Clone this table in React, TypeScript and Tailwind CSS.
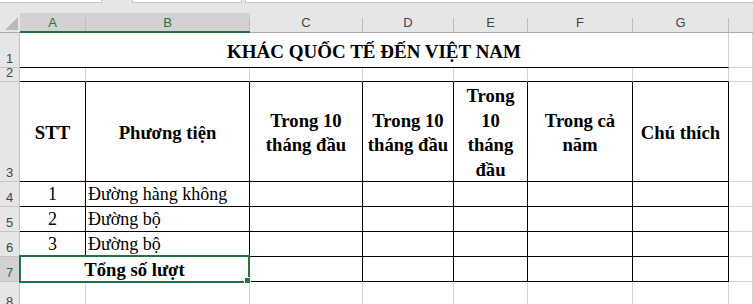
import React from 'react'

const serif = "font-['Liberation_Serif','Times_New_Roman',serif]"
const sans = "font-['Liberation_Sans',Arial,sans-serif]"

const GRAY = 'border-r border-b border-[#d4d4d4]'
const BLACK = 'border-r border-b border-black'
const ROW2 = 'border-r border-b border-r-[#d4d4d4] border-b-black'

const columns = ['A', 'B', 'C', 'D', 'E', 'F', 'G']

function ColHeader({ label, selected }: { label: string; selected?: boolean }) {
  return (
    <div
      className={`flex ${selected ? 'bg-[#d2d2d2] border-b-2 border-[#217346] text-[#217346]' : 'bg-[#e6e6e6] border-b border-[#ababab] text-[#444]'}`}
    >
      <div className="flex-1 flex items-center justify-center leading-[15px]">{label}</div>
      <div className="w-px mt-[5px] bg-[#bcbcbc]" />
    </div>
  )
}

function RowHeader({ n, selected }: { n: number; selected?: boolean }) {
  return (
    <div
      className={`flex items-end justify-center pb-[1px] leading-[15px] border-r border-b border-[#c4c4c4] ${selected ? 'bg-[#d2d2d2] text-[#217346]' : 'bg-[#e6e6e6] text-[#444]'}`}
    >
      {n}
    </div>
  )
}

function HeadCell({ lines }: { lines: string[] }) {
  return (
    <div className={`${BLACK} flex items-center justify-center pt-[3px] text-center font-bold text-[18.67px] leading-[24.5px] whitespace-nowrap`}>
      <span>
        {lines.map((l, i) => (
          <React.Fragment key={i}>
            {i > 0 && <br />}
            {l}
          </React.Fragment>
        ))}
      </span>
    </div>
  )
}

export default function App() {
  const rows = [
    { n: 4, stt: '1', name: 'Đường hàng không' },
    { n: 5, stt: '2', name: 'Đường bộ' },
    { n: 6, stt: '3', name: 'Đường bộ' },
  ]

  return (
    <div className={`w-[753px] h-[304px] overflow-hidden bg-white ${serif} text-black`}>
      {/* top strip with the formula bar boxes */}
      <div className="h-[13px] bg-[#e6e6e6] flex items-start">
        <div className="w-[102px] h-[3px] bg-white border-b border-r border-[#c6c6c6]" />
        <div className="ml-[30px] w-[110px] h-[3px] bg-white border-b border-x border-[#c6c6c6]" />
        <div className="ml-[3px] flex-1 h-[3px] bg-white border-b border-l border-[#c6c6c6]" />
      </div>

      <div className="grid grid-cols-[20px_66px_164px_113px_91px_74px_105px_96px_1fr] grid-rows-[20px_35px_14px_100px_25px_25px_25px_25px_29px]">
        {/* column headers */}
        <div className="bg-[#e6e6e6] border-b border-[#ababab] flex items-end justify-end pr-[2px] pb-[2px]">
          <svg width="13" height="13" viewBox="0 0 13 13">
            <polygon points="13,0 13,13 0,13" fill="#b9b9b9" />
          </svg>
        </div>
        {columns.map((c) => (
          <div key={c} className={`${sans} text-[13px] contents`}>
            <ColHeader label={c} selected={c === 'A' || c === 'B'} />
          </div>
        ))}
        <div className="bg-[#e6e6e6] border-b border-[#ababab]" />

        {/* row 1: title */}
        <div className={`${sans} text-[13px] contents`}>
          <RowHeader n={1} />
        </div>
        <div className="col-span-7 flex items-end justify-center pb-[1px] border-r border-b border-r-[#d4d4d4] border-b-black font-bold text-[19px] leading-normal">
          KHÁC QUỐC TẾ ĐẾN VIỆT NAM
        </div>
        <div className={GRAY} />

        {/* row 2 */}
        <div className={`${sans} text-[13px] contents`}>
          <RowHeader n={2} />
        </div>
        {columns.map((c) => (
          <div key={c} className={ROW2} />
        ))}
        <div className={GRAY} />

        {/* row 3: table header */}
        <div className={`${sans} text-[13px] contents`}>
          <RowHeader n={3} />
        </div>
        <HeadCell lines={['STT']} />
        <HeadCell lines={['Phương tiện']} />
        <HeadCell lines={['Trong 10', 'tháng đầu']} />
        <HeadCell lines={['Trong 10', 'tháng đầu']} />
        <HeadCell lines={['Trong', '10', 'tháng', 'đầu']} />
        <HeadCell lines={['Trong cả', 'năm']} />
        <HeadCell lines={['Chú thích']} />
        <div className={GRAY} />

        {/* rows 4-6 */}
        {rows.map((r) => (
          <React.Fragment key={r.n}>
            <div className={`${sans} text-[13px] contents`}>
              <RowHeader n={r.n} />
            </div>
            <div className={`${BLACK} text-center text-[18px] leading-[25px]`}>{r.stt}</div>
            <div className={`${BLACK} pl-[2px] text-[18px] leading-[25px] whitespace-nowrap`}>{r.name}</div>
            <div className={BLACK} />
            <div className={BLACK} />
            <div className={BLACK} />
            <div className={BLACK} />
            <div className={BLACK} />
            <div className={GRAY} />
          </React.Fragment>
        ))}

        {/* row 7: total, selected */}
        <div className={`${sans} text-[13px] contents`}>
          <RowHeader n={7} selected />
        </div>
        <div className={`${BLACK} col-span-2 relative text-center font-bold text-[18.67px] leading-[25px]`}>
          Tổng số lượt
          <div className="absolute left-[-1px] top-[-2px] w-[231px] h-[28px] border-2 border-[#217346]">
            <div className="absolute left-[223px] top-[20px] w-[7px] h-[7px] bg-[#217346] border border-white" />
          </div>
        </div>
        <div className={BLACK} />
        <div className={BLACK} />
        <div className={BLACK} />
        <div className={BLACK} />
        <div className={BLACK} />
        <div className={GRAY} />

        {/* row 8 */}
        <div className={`${sans} text-[13px] contents`}>
          <RowHeader n={8} />
        </div>
        {columns.map((c) => (
          <div key={c} className={GRAY} />
        ))}
        <div className={GRAY} />
      </div>
    </div>
  )
}
